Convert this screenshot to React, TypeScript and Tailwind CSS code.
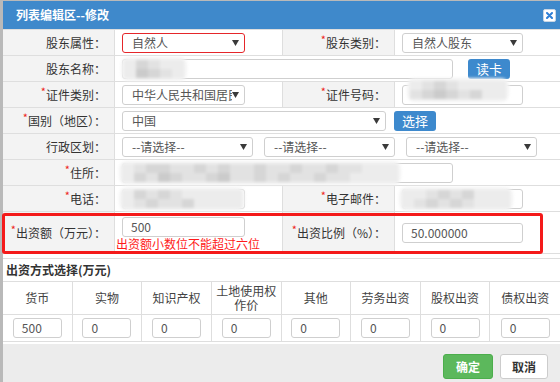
import type { ReactNode } from 'react';

const line = 'border-[#dedede]';

function Arrow() {
  return (
    <svg width="7" height="6" viewBox="0 0 7 6" className="shrink-0">
      <path d="M0 0h7L3.5 6z" fill="#3a3a3a" />
    </svg>
  );
}

function Mosaic({ className, tones }: { className: string; tones: string[][] }) {
  return (
    <div
      className={`pointer-events-none absolute flex flex-col rounded-[8px] bg-[#f4f4f4] p-[3px] blur-[1.5px] ${className}`}
    >
      {tones.map((row, i) => (
        <div key={i} className="flex">
          {row.map((c, j) => (
            <div key={j} className="h-[9px] w-[12px]" style={{ backgroundColor: c }} />
          ))}
        </div>
      ))}
    </div>
  );
}

function Select({ value, w, red }: { value: string; w: string; red?: boolean }) {
  return (
    <div
      className={`flex h-[20px] shrink-0 items-center rounded-[3px] border bg-white pl-[9px] pr-[5px] text-[12px] text-[#555] ${
        red ? 'border-[#e5262a]' : 'border-[#cfcfcf]'
      } ${w}`}
    >
      <span className="min-w-0 flex-1 overflow-hidden whitespace-nowrap">{value}</span>
      <Arrow />
    </div>
  );
}

function Input({ value, w, children }: { value?: string; w: string; children?: ReactNode }) {
  return (
    <div
      className={`relative flex h-[20px] shrink-0 items-center rounded-[3px] border border-[#cfcfcf] bg-white pl-[8px] text-[12px] text-[#555] ${w}`}
    >
      {value}
      {children}
    </div>
  );
}

function Label({ text, req }: { text: string; req?: boolean }) {
  return (
    <div
      className={`flex w-[112px] shrink-0 items-center justify-end border-r ${line} bg-[#f3f3f3] pr-[8px] text-[12px] text-[#333]`}
    >
      {req && <span className="relative -top-[3px] text-[11px] leading-none text-[#ee2222]">*</span>}
      {text}：
    </div>
  );
}

function Row({ children }: { children: ReactNode }) {
  return <div className={`flex h-[26px] border-b ${line}`}>{children}</div>;
}

const Cell = ({ children }: { children?: ReactNode }) => (
  <div className={`flex w-[168px] shrink-0 items-center border-r ${line} pl-[7px]`}>{children}</div>
);

const Wide = ({ children }: { children?: ReactNode }) => (
  <div className="flex flex-1 items-center pl-[7px]">{children}</div>
);

const BlueBtn = ({ text, className }: { text: string; className: string }) => (
  <div
    className={`flex h-[20px] w-[42px] items-center justify-center rounded-[3px] bg-[#3d89cd] text-[13px] text-white ${className}`}
  >
    {text}
  </div>
);

const g1 = '#d6d6d6';
const g2 = '#e2e2e2';
const g3 = '#cbcbcb';
const g4 = '#ececec';

const cols = ['货币', '实物', '知识产权', '土地使用权作价', '其他', '劳务出资', '股权出资', '债权出资'];
const vals = ['500', '0', '0', '0', '0', '0', '0', '0'];

export default function App() {
  return (
    <div className="relative h-[382px] w-[560px] overflow-hidden bg-[#b9b9b9] pl-[3px] pt-px font-['Noto_Sans_CJK_SC','Noto_Sans',sans-serif]">
      <div className="flex h-full flex-col bg-white">
        <div className="flex h-[28px] shrink-0 items-center justify-between bg-[#3f89cb] pl-[13px] pr-[4px] text-[12px] font-bold text-white">
          <span>列表编辑区--修改</span>
          <div className="flex h-[13px] w-[13px] items-center justify-center rounded-[2px] border border-[#c9d6e4] bg-white">
            <svg width="7" height="7" viewBox="0 0 7 7">
              <path d="M1 1l5 5M6 1L1 6" stroke="#2f7fd6" strokeWidth="2" strokeLinecap="round" />
            </svg>
          </div>
        </div>

        <div className={`border-t ${line}`}>
          <Row>
            <Label text="股东属性" />
            <Cell>
              <Select value="自然人" w="w-[123px]" red />
            </Cell>
            <Label text="股东类别" req />
            <Wide>
              <Select value="自然人股东" w="w-[121px]" />
            </Wide>
          </Row>
          <Row>
            <Label text="股东名称" />
            <Wide>
              <Input w="w-[331px]">
                <Mosaic className="-left-[2px] -top-[3px]" tones={[[g4, g1, g2, g4, g4], [g4, g3, g1, g2, g4]]} />
              </Input>
              <BlueBtn text="读卡" className="ml-[15px]" />
            </Wide>
          </Row>
          <Row>
            <Label text="证件类别" req />
            <Cell>
              <Select value="中华人民共和国居民身份证" w="w-[123px]" />
            </Cell>
            <Label text="证件号码" req />
            <Wide>
              <Input w="w-[121px]">
                <Mosaic className="left-[4px] -top-[8px]" tones={[[g4, g2, g1, g2, g4, g4, g4, g4], [g2, g1, g3, g1, g2, g1, g4, g4]]} />
              </Input>
            </Wide>
          </Row>
          <Row>
            <Label text="国别（地区）" req />
            <Wide>
              <Select value="中国" w="w-[264px]" />
              <BlueBtn text="选择" className="ml-[8px]" />
            </Wide>
          </Row>
          <Row>
            <Label text="行政区划" />
            <Wide>
              <div className="flex gap-[11px]">
                <Select value="--请选择--" w="w-[131px]" />
                <Select value="--请选择--" w="w-[131px]" />
                <Select value="--请选择--" w="w-[131px]" />
              </div>
            </Wide>
          </Row>
          <Row>
            <Label text="住所" req />
            <Wide>
              <Input w="w-[331px]">
                <Mosaic
                  className="-left-[4px] -top-[3px]"
                  tones={[
                    [g4, g2, g1, g1, g2, g2, g1, g2, g1, g2, g2, g1, g2, g2, g1, g2, g2, g1, g2, g2, g4, g4, g4],
                    [g4, g1, g2, g3, g1, g2, g2, g1, g3, g2, g2, g1, g2, g1, g2, g2, g1, g2, g2, g4, g4, g4, g4],
                  ]}
                />
              </Input>
            </Wide>
          </Row>
          <Row>
            <Label text="电话" req />
            <Cell>
              <Input w="w-[123px]">
                <Mosaic className="-left-[4px] -top-[3px]" tones={[[g4, g1, g2, g1, g2, g4, g4, g4, g4, g4], [g4, g2, g1, g2, g2, g1, g4, g4, g4, g4]]} />
              </Input>
            </Cell>
            <Label text="电子邮件" req />
            <Wide>
              <Input w="w-[121px]">
                <Mosaic className="-left-[4px] -top-[3px]" tones={[[g4, g4, g2, g1, g2, g1, g4, g4, g4], [g4, g2, g1, g2, g1, g2, g4, g4, g4]]} />
              </Input>
            </Wide>
          </Row>
          <div className={`flex h-[42px] border-b ${line}`}>
            <Label text="出资额（万元）" req />
            <div className={`flex w-[168px] shrink-0 flex-col justify-center border-r ${line} pl-[7px] pt-[2px]`}>
              <Input value="500" w="w-[123px]" />
              <div className="-ml-[6px] text-[12px] leading-[14px] text-[#ff1a1a]">出资额小数位不能超过六位</div>
            </div>
            <Label text="出资比例（%）" req />
            <Wide>
              <Input value="50.000000" w="w-[121px]" />
            </Wide>
          </div>
        </div>

        <div className={`mt-[4px] border-t ${line}`}>
          <div className="flex h-[22px] items-center pl-[3px] text-[12px] font-bold text-[#333]">出资方式选择(万元)</div>
          <div className={`grid grid-cols-8 border-t ${line}`}>
            {cols.map((c, i) => (
              <div
                key={c}
                className={`flex h-[33px] items-center justify-center border-b ${line} px-[2px] text-center text-[12px] leading-[14px] text-[#444] ${
                  i < 7 ? 'border-r' : ''
                }`}
              >
                {c === '土地使用权作价' ? (
                  <span>
                    土地使用权
                    <br />
                    作价
                  </span>
                ) : (
                  c
                )}
              </div>
            ))}
            {vals.map((v, i) => (
              <div
                key={i}
                className={`flex h-[27px] items-center justify-center border-b ${line} ${i < 7 ? 'border-r' : ''}`}
              >
                <Input value={v} w="w-[49px]" />
              </div>
            ))}
          </div>
        </div>

        <div className="mt-[2px] flex flex-1 items-start justify-end gap-[7px] bg-[#ececec] pr-[12px] pt-[10px]">
          <div className="flex h-[25px] w-[50px] items-center justify-center rounded-[3px] border border-[#4cae4c] bg-[#5cb85c] text-[12px] font-bold text-white">
            确定
          </div>
          <div className="flex h-[25px] w-[48px] items-center justify-center rounded-[3px] border border-[#cccccc] bg-white text-[12px] font-bold text-[#333]">
            取消
          </div>
        </div>
      </div>

      <div className="pointer-events-none absolute left-[2px] top-[213px] h-[41px] w-[541px] rounded-[3px] border-[3px] border-[#f41a1a]" />
    </div>
  );
}
